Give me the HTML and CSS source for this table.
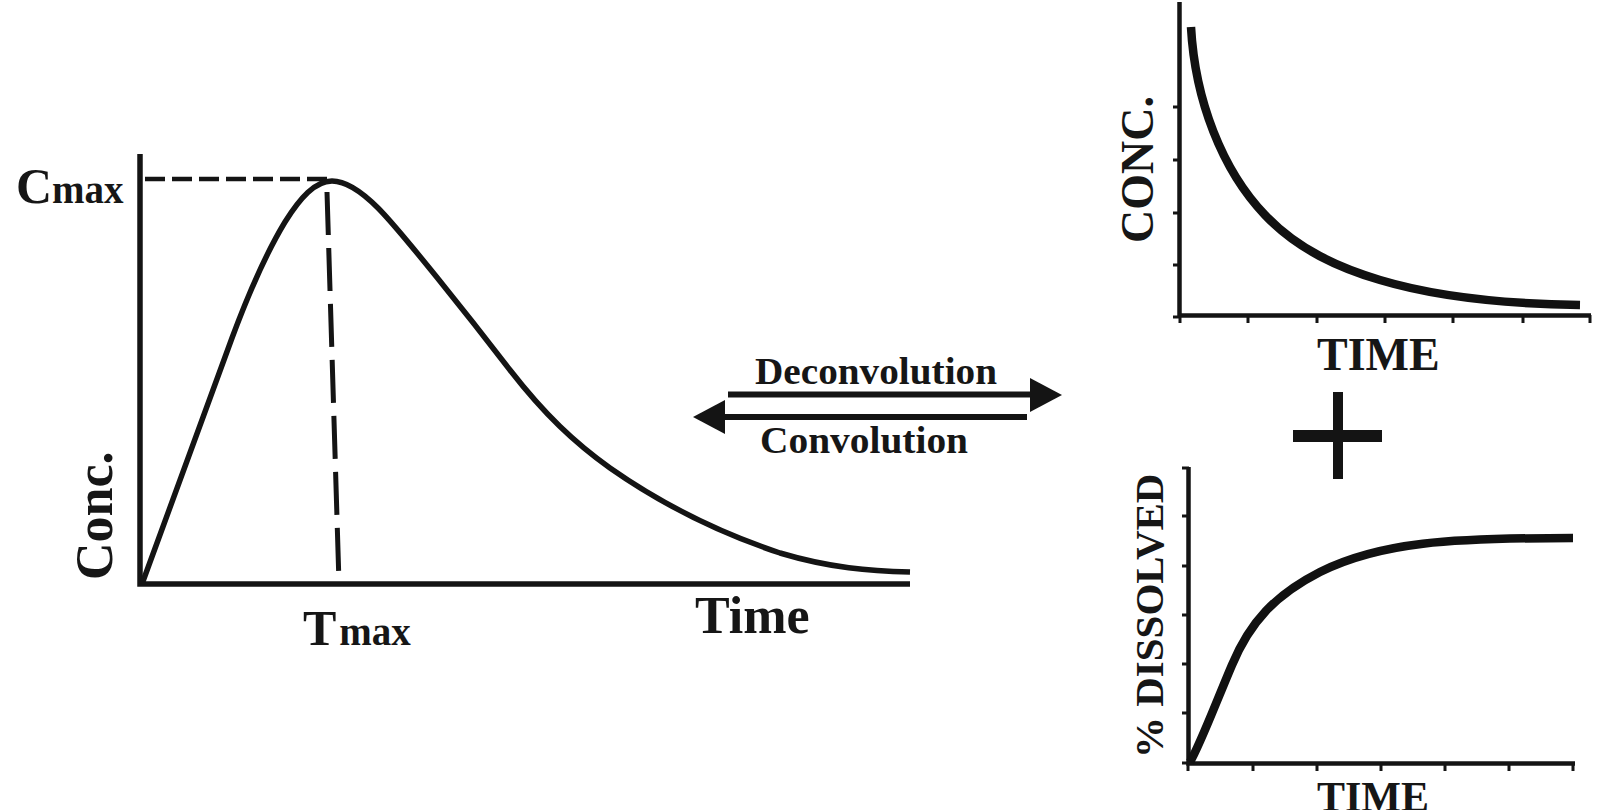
FILE: index.html
```html
<!DOCTYPE html>
<html lang="en">
<head>
<meta charset="utf-8">
<title>Deconvolution / Convolution</title>
<link rel="stylesheet" href="styles.css">
</head>
<body>
<figure class="figure">
<svg class="diagram" width="1606" height="810" viewBox="0 0 1606 810" xmlns="http://www.w3.org/2000/svg">
  <!-- Left: plasma concentration curve -->
  <g class="panel-left">
    <path class="axis-main" d="M140,154 L140,584 L910,584"/>
    <line class="dash-h" x1="145" y1="179" x2="327" y2="179"/>
    <line class="dash-v" x1="327" y1="192" x2="339" y2="583"/>
    <path class="curve-main" d="M142,584 L232,338 C248,295 265,255 285,222 C300,198 315,181 332,181 C345,181 360,190 378,208 C400,230 470,318 510,370 C545,415 575,443 610,468 C660,503 720,533 780,553 C830,568 870,571 910,572"/>
    <text class="lbl" x="16" y="203"><tspan class="lbl-cap">C</tspan><tspan class="lbl-sub">max</tspan></text>
    <text class="lbl" x="303" y="645"><tspan class="lbl-cap">T</tspan><tspan class="lbl-sub" dx="3">max</tspan></text>
    <text class="lbl lbl-axis" transform="translate(112,580) rotate(-90)">Conc.</text>
    <text class="lbl lbl-axis" x="695" y="633">Time</text>
  </g>

  <!-- Middle: arrows -->
  <g class="panel-mid">
    <line class="arrow-line" x1="728" y1="394.5" x2="1032" y2="394.5"/>
    <polygon class="arrow-head" points="1030,378 1062,395 1030,412"/>
    <line class="arrow-line" x1="723" y1="417" x2="1027" y2="417"/>
    <polygon class="arrow-head" points="725,400 693,417 725,434"/>
    <text class="lbl lbl-arrow" x="755" y="384" textLength="242" lengthAdjust="spacingAndGlyphs">Deconvolution</text>
    <text class="lbl lbl-arrow" x="760" y="453" textLength="208" lengthAdjust="spacingAndGlyphs">Convolution</text>
  </g>

  <!-- Right top: concentration decay -->
  <g class="panel-rt">
    <path class="axis-small" d="M1179.5,2 L1179.5,315.5 L1591,315.5"/>
    <path class="tick" d="M1173,107 H1180 M1173,160 H1180 M1173,213 H1180 M1173,265 H1180 M1173,317 H1180 M1180,315 V323 M1248,315 V323 M1317,315 V323 M1385,315 V323 M1453,315 V323 M1523,315 V323 M1590,315 V323"/>
    <path class="curve-thick" d="M1191,27 C1195,100 1222,170 1265,215 C1298,250 1340,268 1380,280 C1440,298 1510,304 1580,305"/>
    <text class="lbl lbl-rt" transform="translate(1153,243) rotate(-90)">CONC.</text>
    <text class="lbl lbl-rt" x="1317" y="370">TIME</text>
  </g>

  <!-- Plus -->
  <g class="plus">
    <rect x="1293" y="430" width="89" height="12"/>
    <rect x="1333" y="392" width="10" height="87"/>
  </g>

  <!-- Right bottom: dissolution -->
  <g class="panel-rb">
    <path class="axis-small" d="M1188.5,467 L1188.5,763.5 L1575,763.5"/>
    <path class="tick" d="M1182,468 H1189 M1182,516 H1189 M1182,566 H1189 M1182,615 H1189 M1182,664 H1189 M1182,713 H1189 M1182,763 H1189 M1188,763 V771 M1253,763 V771 M1317,763 V771 M1381,763 V771 M1445,763 V771 M1509,763 V771 M1573,763 V771"/>
    <path class="curve-thick" d="M1190,762 C1200,745 1215,705 1232,665 C1250,622 1275,595 1320,572 C1380,542 1450,538 1573,538"/>
    <text class="lbl lbl-rb" transform="translate(1163,758) rotate(-90)">% DISSOLVED</text>
    <text class="lbl lbl-rb2" x="1317" y="811">TIME</text>
  </g>
</svg>
</figure>
</body>
</html>
```

FILE: styles.css
```css
html, body {
  margin: 0;
  padding: 0;
  background: #ffffff;
  overflow: hidden;
}

.figure {
  margin: 0;
  width: 1606px;
  height: 810px;
}

.diagram {
  display: block;
}

.axis-main {
  fill: none;
  stroke: #141414;
  stroke-width: 5.5;
  stroke-linejoin: miter;
}

.axis-small {
  fill: none;
  stroke: #141414;
  stroke-width: 4.5;
  stroke-linejoin: miter;
}

.tick {
  fill: none;
  stroke: #141414;
  stroke-width: 3;
}

.dash-h {
  stroke: #141414;
  stroke-width: 4.5;
  stroke-dasharray: 20 7;
}

.dash-v {
  stroke: #141414;
  stroke-width: 5;
  stroke-dasharray: 43 13;
}

.curve-main {
  fill: none;
  stroke: #141414;
  stroke-width: 5.5;
  stroke-linejoin: round;
}

.curve-thick {
  fill: none;
  stroke: #111111;
  stroke-width: 8.5;
  stroke-linejoin: round;
}

.arrow-line {
  stroke: #141414;
  stroke-width: 6;
}

.arrow-head,
.plus rect {
  fill: #141414;
}

.lbl {
  font-family: "Liberation Serif", "Times New Roman", serif;
  font-weight: bold;
  fill: #161616;
}

.lbl-cap {
  font-size: 50px;
}

.lbl-sub {
  font-size: 39px;
}

.lbl-axis {
  font-size: 52px;
}

.lbl-arrow {
  font-size: 38px;
}

.lbl-rt {
  font-size: 46px;
}

.lbl-rb {
  font-size: 41px;
}

.lbl-rb2 {
  font-size: 42px;
}
```
